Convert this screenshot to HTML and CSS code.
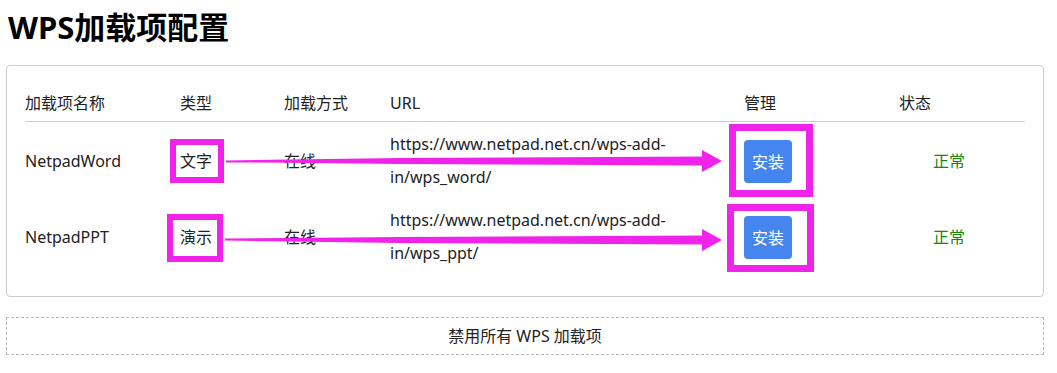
FILE: index.html
```html
<!DOCTYPE html>
<html lang="zh">
<head>
<meta charset="utf-8">
<title>WPS加载项配置</title>
<link rel="stylesheet" href="styles.css">
</head>
<body>
    <h1 class="pagetitle">WPS加载项配置</h1>
    <div class="card">
        <table class="addons">
            <colgroup>
                <col class="c-name">
                <col class="c-type">
                <col class="c-mode">
                <col class="c-url">
                <col class="c-manage">
                <col class="c-state">
            </colgroup>
            <thead>
                <tr>
                    <th>加载项名称</th>
                    <th>类型</th>
                    <th>加载方式</th>
                    <th>URL</th>
                    <th>管理</th>
                    <th>状态</th>
                </tr>
            </thead>
            <tbody>
                <tr>
                    <td>NetpadWord</td>
                    <td>文字</td>
                    <td>在线</td>
                    <td>https://www.netpad.net.cn/wps-add-in/wps_word/</td>
                    <td><button class="installbtn">安装</button></td>
                    <td class="state-ok">正常</td>
                </tr>
                <tr>
                    <td>NetpadPPT</td>
                    <td>演示</td>
                    <td>在线</td>
                    <td>https://www.netpad.net.cn/wps-add-in/wps_ppt/</td>
                    <td><button class="installbtn">安装</button></td>
                    <td class="state-ok">正常</td>
                </tr>
            </tbody>
        </table>
    </div>
    <div class="disableall">禁用所有 WPS 加载项</div>

    <!-- 截图上的标注：洋红色方框和箭头 -->
    <svg class="marks" width="1057" height="373" viewBox="0 0 1057 373">
        <g fill="none" stroke="#f023ea">
            <rect x="173" y="142" width="48" height="38" stroke-width="6"/>
            <rect x="170" y="217" width="50" height="42" stroke-width="6"/>
            <rect x="732.5" y="127.5" width="77" height="66" stroke-width="7"/>
            <rect x="730.5" y="207.5" width="80" height="61" stroke-width="7"/>
        </g>
        <g fill="#f023ea">
            <polygon points="226,160.6 290,159.4 400,158 702,156.6 702,150 722,161 702,172 702,165.4 400,164 290,162.8 226,162.4"/>
            <polygon points="225,238.6 290,238 400,237 702,235.6 702,229 722,240 702,251 702,244.4 400,243 290,241.6 225,240.4"/>
        </g>
    </svg>
</body>
</html>
```

FILE: styles.css
```css
body{
    margin: 0;
    padding: 0 13px 0 6px;
    font-family: "Noto Sans", "Noto Sans CJK SC", sans-serif;
    font-size: 16px;
    color: #222;
    position: relative;
}
.pagetitle{
    margin: 9px 0 20px 2px;
    font-size: 31px;
    line-height: 36px;
    font-weight: bold;
    color: #000;
}
.card{
    border: 1px solid #ccc;
    border-radius: 4px;
    padding: 20px 18px 22px 18px;
}
.addons{
    width: 1000px;
    table-layout: fixed;
    border-collapse: collapse;
}
.c-name{ width: 155px; }
.c-type{ width: 104px; }
.c-mode{ width: 106px; }
.c-url{ width: 354px; }
.c-manage{ width: 155px; }
.c-state{ width: 126px; }
.addons th{
    text-align: left;
    font-weight: normal;
    line-height: 35px;
    padding: 0;
    border-bottom: 1px solid #ccc;
}
.addons td{
    padding: 6px 0 4px 0;
    line-height: 33px;
    vertical-align: middle;
}
.installbtn{
    width: 48px;
    height: 43px;
    border: none;
    border-radius: 4px;
    background: #4585f0;
    color: #fff;
    font-family: inherit;
    font-size: 16px;
    padding: 0;
}
.state-ok{
    color: #118811;
}
.addons td.state-ok{
    padding-left: 34px;
}
.disableall{
    margin-top: 20px;
    border: 1px dashed #bbb;
    line-height: 36px;
    text-align: center;
}
.marks{
    position: absolute;
    left: 0;
    top: 0;
    pointer-events: none;
}
```
